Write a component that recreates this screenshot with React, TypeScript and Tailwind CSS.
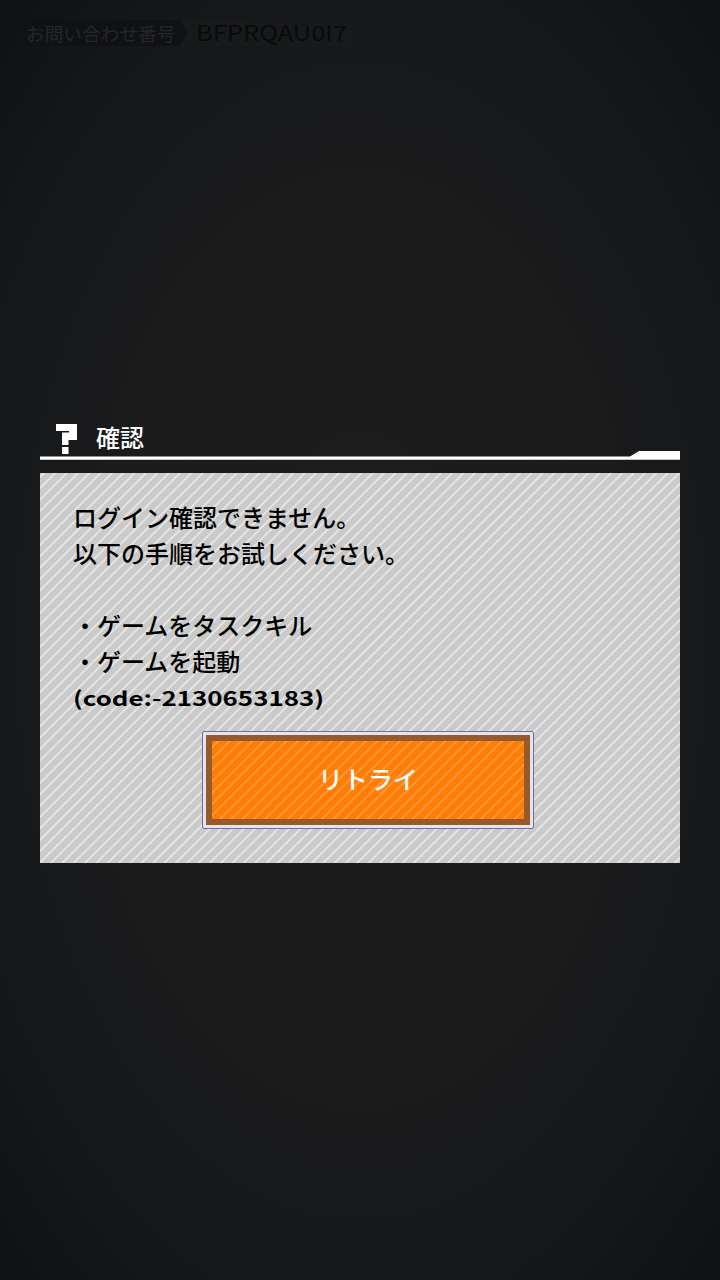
const panelStripes =
  "bg-[repeating-linear-gradient(135deg,transparent_0px,transparent_1.5px,rgba(255,255,255,0.5)_2.2px,rgba(255,255,255,0.5)_3.4px,transparent_4.1px,transparent_8.02px)]";

const buttonStripes =
  "bg-[repeating-linear-gradient(135deg,transparent_0px,transparent_3.3px,rgba(255,255,255,0.22)_4px,rgba(255,255,255,0.22)_5.2px,transparent_5.9px,transparent_8.02px)]";

const messageLines = [
  "ログイン確認できません。",
  "以下の手順をお試しください。",
  "",
  "・ゲームをタスクキル",
  "・ゲームを起動",
];

function QuestionIcon() {
  return (
    <svg width="22" height="30" viewBox="0 0 22 30" fill="#fff" aria-hidden="true">
      <path d="M0 0H21V16H12.5V21H6V8.5H13V7H0Z" />
      <path d="M6 23H12.5V30H6Z" />
    </svg>
  );
}

function InquiryNumber() {
  return (
    <div className="ml-6 flex h-[26px] w-[330px] bg-[#18191a] leading-[26px] whitespace-nowrap">
      <span className="w-[163px] bg-[#101113] pl-[2px] text-[18.7px] text-[#252628] [clip-path:polygon(0_0,96%_0,100%_50%,96%_100%,0_100%)]">
        お問い合わせ番号
      </span>
      <svg className="ml-[9px] overflow-visible" width="152" height="26" viewBox="0 0 152 26" fill="#090a0b">
        <text x="0" y="21" fontSize="21" textLength="151" lengthAdjust="spacingAndGlyphs">BFPRQAU0I7</text>
      </svg>
    </div>
  );
}

export default function App() {
  return (
    <main className="flex h-[1280px] w-[720px] flex-col overflow-hidden bg-[radial-gradient(ellipse_72%_68%_at_50%_50%,#1d1d1d_0%,#1b1b1c_50%,#151719_80%,#0f1113_100%)] pt-5 font-['Noto_Sans_CJK_JP','Inter',sans-serif]">
      <InquiryNumber />

      <section className="mx-10 mt-[374px]">
        <header className="flex h-8 items-start pt-1 pl-4">
          <QuestionIcon />
          <h1 className="-mt-px ml-[18px] text-2xl leading-7 font-medium text-white">確認</h1>
        </header>
        <svg className="mt-[-2px] block" width="640" height="10" viewBox="0 0 640 10" fill="#fff">
          <path d="M0 6.6H590L599 1H640V9.8H0Z" />
        </svg>

        <div className={`mt-[13px] flex h-[390px] flex-col bg-[#cacaca] pt-[26px] pl-[33px] text-black ${panelStripes}`}>
          {messageLines.map((line, idx) => (
            <p key={idx} className="h-9 text-2xl leading-9 font-medium whitespace-nowrap">{line}</p>
          ))}
          <p className="h-9">
            <svg className="overflow-visible" width="252" height="36" viewBox="0 0 252 36">
              <text x="0" y="27" fontSize="20" fontWeight="700" textLength="251" lengthAdjust="spacingAndGlyphs">(code:-2130653183)</text>
            </svg>
          </p>
          <button type="button" className="mt-4 ml-[129px] h-[98px] w-[332px] rounded-[2px] border border-[#6874a8] bg-[#e6e4ea] p-[3px]">
            <span className={`flex h-full w-full items-center justify-center border-6 border-[#965a2e] bg-[#ff7c05] bg-origin-padding pb-0.5 text-[25px] font-medium text-white ${buttonStripes}`}>
              リトライ
            </span>
          </button>
        </div>
      </section>
    </main>
  );
}
